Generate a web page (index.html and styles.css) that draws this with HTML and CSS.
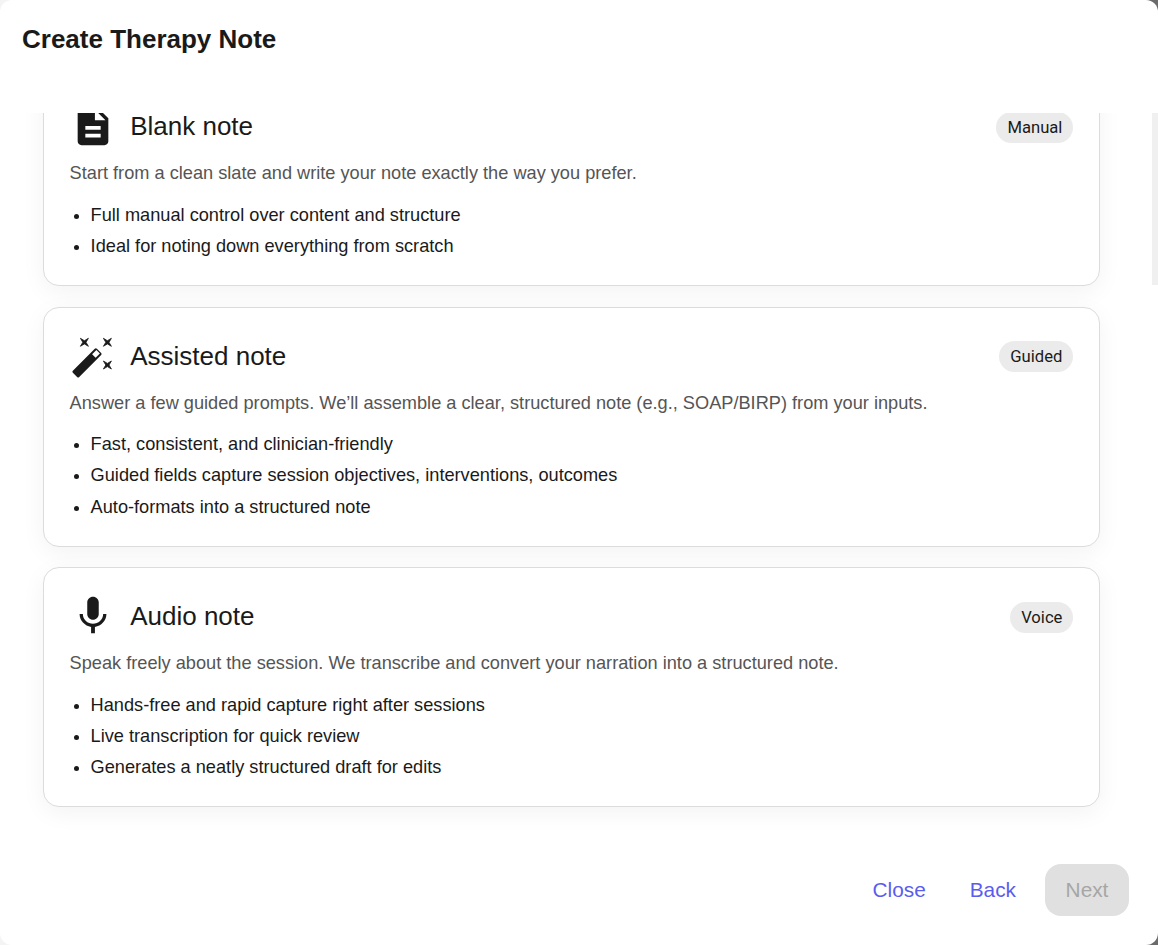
FILE: index.html
```html
<!DOCTYPE html>
<html lang="en">
<head>
    <meta charset="utf-8"/>
    <title>Create Therapy Note</title>
    <link rel="stylesheet" href="styles.css">
</head>
<body>
    <div class="dialog" role="dialog" aria-modal="true" aria-labelledby="dialog-title">
        <h2 class="dialog-title" id="dialog-title">Create Therapy Note</h2>

        <div class="dialog-content">
            <div class="note-list">
                <section class="note-card note-card-blank">
                    <div class="note-head">
                        <svg class="note-icon" viewBox="0 0 24 24" aria-hidden="true"><path d="M14 2H6c-1.1 0-2 .9-2 2v16c0 1.1.9 2 2 2h12c1.1 0 2-.9 2-2V8l-6-6zm2 16H8v-2h8v2zm0-4H8v-2h8v2zm-3-5V3.5L18.5 9H13z"/></svg>
                        <h3 class="note-name">Blank note</h3>
                        <span class="note-badge">Manual</span>
                    </div>
                    <p class="note-text">Start from a clean slate and write your note exactly the way you prefer.</p>
                    <ul class="note-points">
                        <li>Full manual control over content and structure</li>
                        <li>Ideal for noting down everything from scratch</li>
                    </ul>
                </section>

                <section class="note-card">
                    <div class="note-head">
                        <svg class="note-icon" viewBox="0 0 46 46" aria-hidden="true">
                            <rect x="0" y="25.400" width="34" height="9" rx="1.500" transform="rotate(-45 17 29.900)"/>
                            <rect class="wand-tip" x="23" y="18.300" width="6" height="5" transform="rotate(-45 26 20.800)"/>
                            <path class="sparkle" d="M10.400 5.300l2.400 4-2.400 4 4-2.400 4 2.400-2.400-4 2.400-4-4 2.400z"/>
                            <path class="sparkle" d="M33.400 5.300l2.400 4-2.400 4 4-2.400 4 2.400-2.400-4 2.400-4-4 2.400z"/>
                            <path class="sparkle" d="M33.400 28l2.400 4-2.400 4 4-2.400 4 2.400-2.400-4 2.400-4-4 2.400z"/>
                        </svg>
                        <h3 class="note-name">Assisted note</h3>
                        <span class="note-badge">Guided</span>
                    </div>
                    <p class="note-text">Answer a few guided prompts. We’ll assemble a clear, structured note (e.g., SOAP/BIRP) from your inputs.</p>
                    <ul class="note-points">
                        <li>Fast, consistent, and clinician-friendly</li>
                        <li>Guided fields capture session objectives, interventions, outcomes</li>
                        <li>Auto-formats into a structured note</li>
                    </ul>
                </section>

                <section class="note-card">
                    <div class="note-head">
                        <svg class="note-icon" viewBox="0 0 24 24" aria-hidden="true"><path d="M12 14c1.66 0 2.99-1.34 2.99-3L15 5c0-1.66-1.34-3-3-3S9 3.34 9 5v6c0 1.660 1.34 3 3 3zm5.300-3c0 3-2.540 5.100-5.300 5.100S6.700 14 6.700 11H5c0 3.410 2.720 6.230 6 6.720V21h2v-3.280c3.280-.48 6-3.300 6-6.720h-1.700z"/></svg>
                        <h3 class="note-name">Audio note</h3>
                        <span class="note-badge">Voice</span>
                    </div>
                    <p class="note-text">Speak freely about the session. We transcribe and convert your narration into a structured note.</p>
                    <ul class="note-points">
                        <li>Hands-free and rapid capture right after sessions</li>
                        <li>Live transcription for quick review</li>
                        <li>Generates a neatly structured draft for edits</li>
                    </ul>
                </section>
            </div>
            <div class="scroll-thumb"></div>
        </div>

        <div class="dialog-actions">
            <button class="action-link" type="button">Close</button>
            <button class="action-link" type="button">Back</button>
            <button class="action-next" type="button" disabled>Next</button>
        </div>
    </div>
</body>
</html>
```
FILE: styles.css
```css
html, body {
    height: 100%;
}

body {
    margin: 0;
    /* only the right corners of the dialog show the dark backdrop */
    background: linear-gradient(to right, #f4f4f4 50%, #6b6b6b 50%);
    font-family: "Liberation Sans", Arial, sans-serif;
    color: #1a1a1a;
}

.dialog {
    box-sizing: border-box;
    height: 945px;
    display: flex;
    flex-direction: column;
    background: #fff;
    border-radius: 12px;
    overflow: hidden;
}

.dialog-title {
    flex: none;
    height: 113px;
    box-sizing: border-box;
    margin: 0;
    padding: 24px 22px 0;
    font-size: 26px;
    line-height: 30px;
    font-weight: 700;
}

.dialog-content {
    flex: 1;
    min-height: 0;
    position: relative;
    overflow: hidden;
}

.note-list {
    display: flex;
    flex-direction: column;
    gap: 20.500px;
    margin: -36px 58px 0 43px;
}

.note-card {
    box-sizing: border-box;
    height: 240px;
    padding: 25px 25.600px 0;
    border: 1px solid #dcdcdc;
    border-radius: 16px;
    background: #fff;
    box-shadow: 0 6px 24px rgba(0, 0, 0, 0.05);
}

.note-card-blank {
    height: 209px;
}

.note-head {
    display: flex;
    align-items: center;
    height: 46px;
}

.note-icon {
    flex: none;
    width: 46px;
    height: 46px;
    fill: #1a1a1a;
}

.wand-tip {
    fill: #fff;
}

.sparkle {
    stroke: #1a1a1a;
    stroke-width: 0.800px;
}

.note-name {
    flex: 1;
    margin: 0 0 0 14.600px;
    font-size: 26px;
    line-height: 26px;
    font-weight: 400;
}

.note-badge {
    align-self: flex-start;
    margin-top: 8.500px;
    padding: 0 11px;
    height: 31px;
    line-height: 31px;
    border-radius: 16px;
    background: #ebebeb;
    font-family: Roboto, sans-serif;
    font-size: 16.640px;
}

.note-text {
    margin: 11px 0 0;
    font-size: 18.200px;
    line-height: 26px;
    color: #555;
}

.note-points {
    margin: 13.500px 0 0;
    padding-left: 21px;
    font-size: 18.200px;
    line-height: 31.300px;
}

.scroll-thumb {
    position: absolute;
    top: 0;
    right: 0;
    width: 6px;
    height: 172px;
    background: #f0f0f0;
}

.dialog-actions {
    flex: none;
    display: flex;
    justify-content: flex-end;
    align-items: center;
    gap: 44px;
    padding: 0 29px 29px 0;
}

.action-link,
.action-next {
    border: 0;
    padding: 0;
    font-family: inherit;
    font-size: 20.800px;
    background: none;
}

.action-link {
    color: #5a5cf0;
}

.action-next {
    width: 84px;
    height: 52px;
    margin-left: -15px;
    border-radius: 16px;
    background: #e0e0e0;
    color: #a6a6a6;
}
```
